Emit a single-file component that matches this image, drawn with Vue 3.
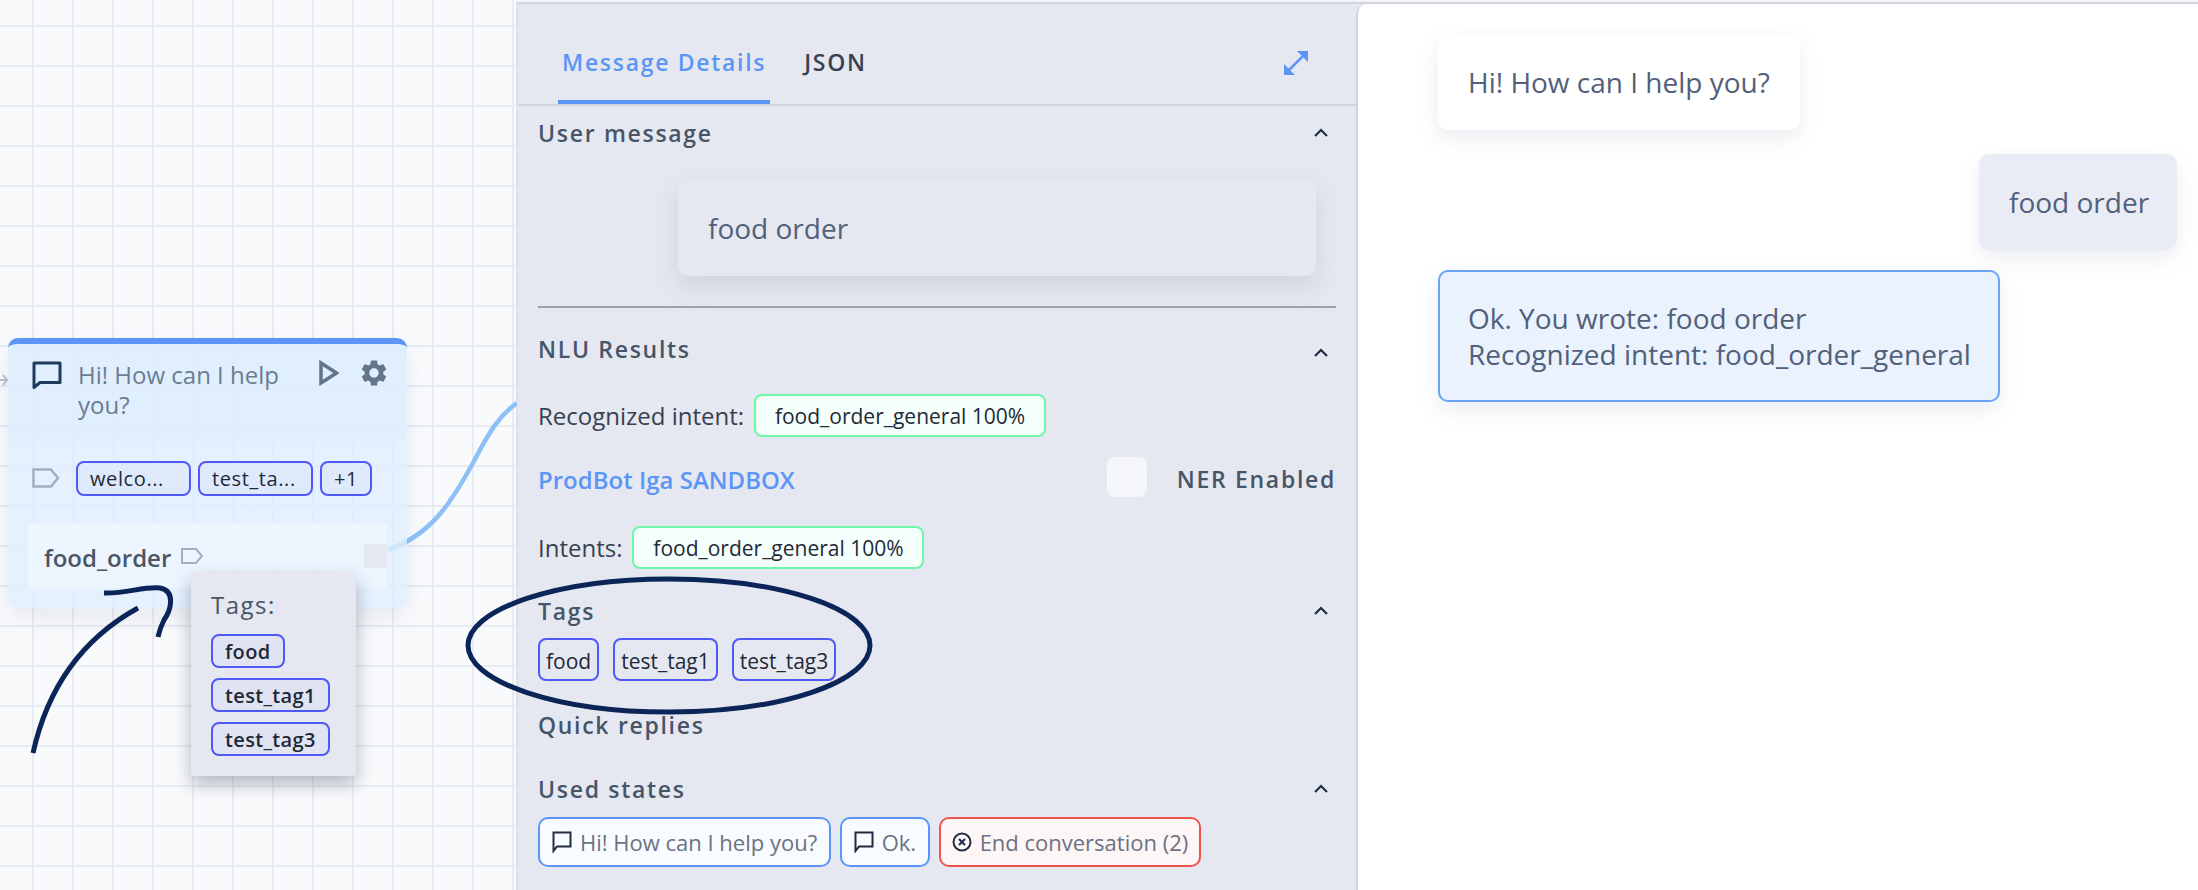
<script setup>
const nodeTags = ['welco...', 'test_ta...']
const popupTags = ['food', 'test_tag1', 'test_tag3']
const gear = 'M19.14 12.94c.04-.3.06-.61.06-.94 0-.32-.02-.64-.07-.94l2.03-1.58a.49.49 0 0 0 .12-.61l-1.92-3.32a.488.488 0 0 0-.59-.22l-2.39.96c-.5-.38-1.03-.7-1.62-.94l-.36-2.54a.484.484 0 0 0-.48-.41h-3.84c-.24 0-.43.17-.47.41l-.36 2.54c-.59.24-1.13.57-1.62.94l-2.39-.96c-.22-.08-.47 0-.59.22L2.74 8.87c-.12.21-.08.47.12.61l2.03 1.58c-.05.3-.09.63-.09.94s.02.64.07.94l-2.03 1.58a.49.49 0 0 0-.12.61l1.92 3.32c.12.22.37.29.59.22l2.39-.96c.5.38 1.03.7 1.62.94l.36 2.54c.05.24.24.41.48.41h3.84c.24 0 .44-.17.47-.41l.36-2.54c.59-.24 1.13-.56 1.62-.94l2.39.96c.22.08.47 0 .59-.22l1.92-3.32c.12-.22.07-.47-.12-.61l-2.01-1.58zM12 15.6c-1.98 0-3.6-1.62-3.6-3.6s1.62-3.6 3.6-3.6 3.6 1.62 3.6 3.6-1.62 3.6-3.6 3.6z'
</script>

<template>
  <div class="app">
    <section class="canvas">
      <svg class="edge" width="517" height="890" viewBox="0 0 517 890">
        <path d="M388 550 C430 535 450 505 473 463 C490 430 500 415 517 403" fill="none" stroke="#8cc0f7" stroke-width="4.5" />
        <path d="M0 380 H6 M3 375 L7 380 L3 385" fill="none" stroke="#b9bec7" stroke-width="2" />
      </svg>

      <div class="node">
        <div class="node-head">
          <svg class="ic-comment" viewBox="0 0 30 28"><path d="M2 2H28V21.5H8L2 26.5Z" fill="none" stroke="#1e3a5f" stroke-width="3" stroke-linejoin="round" /></svg>
          <p class="node-title">Hi! How can I help you?</p>
          <svg class="ic-play" viewBox="0 0 20 26"><path d="M2 3L17.5 13L2 23Z" fill="none" stroke="#64748b" stroke-width="3.5" /></svg>
          <svg class="ic-gear" viewBox="2 2 20 20"><path :d="gear" fill="#64748b" /></svg>
        </div>
        <div class="node-tags">
          <svg class="ic-tag" viewBox="0 0 28 20"><path d="M1.5 1.5H19L26 10L19 18.5H1.5Z" fill="none" stroke="#a3afbd" stroke-width="2.5" /></svg>
          <span v-for="t in nodeTags" :key="t" class="chip node-chip wide">{{ t }}</span>
          <span class="chip node-chip">+1</span>
        </div>
        <div class="node-row">
          <span class="row-name">food_order</span>
          <svg class="ic-tag-small" viewBox="0 0 22 16"><path d="M1 1H15L21 8L15 15H1Z" fill="none" stroke="#a3afbd" stroke-width="2" /></svg>
          <span class="handle"></span>
        </div>
      </div>

      <div class="popup">
        <div class="popup-title">Tags:</div>
        <div v-for="t in popupTags" :key="t"><span class="chip popup-chip">{{ t }}</span></div>
      </div>
    </section>

    <section class="panel">
      <header class="tabs">
        <span class="tab active">Message Details</span>
        <span class="tab">JSON</span>
        <svg class="ic-expand" viewBox="0 0 26 26"><path d="M2 24L24 2" stroke="#5b96f7" stroke-width="2.5" /><path d="M14 1H25V12Z M1 14V25H12Z" fill="#5b96f7" /></svg>
      </header>
      <div class="content">
        <div class="head first"><span>User message</span><svg class="chev" viewBox="0 0 16 10"><path d="M2 8L8 2L14 8" fill="none" stroke="#1f2d45" stroke-width="2.2" /></svg></div>
        <div class="bubble-wrap"><div class="bubble user-bubble">food order</div></div>
        <hr class="rule" />
        <div class="head nlu"><span>NLU Results</span><svg class="chev low" viewBox="0 0 16 10"><path d="M2 8L8 2L14 8" fill="none" stroke="#1f2d45" stroke-width="2.2" /></svg></div>
        <div class="line rec"><span>Recognized intent:</span><span class="chip green">food_order_general 100%</span></div>
        <div class="line bot">
          <span class="bot-name">ProdBot Iga SANDBOX</span>
          <span class="toggle"></span>
          <span class="ner">NER Enabled</span>
        </div>
        <div class="line intents"><span>Intents:</span><span class="chip green">food_order_general 100%</span></div>
        <div class="head tags-head"><span>Tags</span><svg class="chev" viewBox="0 0 16 10"><path d="M2 8L8 2L14 8" fill="none" stroke="#1f2d45" stroke-width="2.2" /></svg></div>
        <div class="tags-row">
          <span class="chip tag">food</span>
          <span class="chip tag">test_tag1</span>
          <span class="chip tag">test_tag3</span>
        </div>
        <div class="head quick"><span>Quick replies</span></div>
        <div class="head used"><span>Used states</span><svg class="chev" viewBox="0 0 16 10"><path d="M2 8L8 2L14 8" fill="none" stroke="#1f2d45" stroke-width="2.2" /></svg></div>
        <div class="states">
          <span class="state blue"><svg class="ic-state" viewBox="0 0 20 22"><path d="M1.5 1.5H18.5V15.5H5L1.5 20Z" fill="none" stroke="#1f2d45" stroke-width="2" /></svg>Hi! How can I help you?</span>
          <span class="state blue"><svg class="ic-state" viewBox="0 0 20 22"><path d="M1.5 1.5H18.5V15.5H5L1.5 20Z" fill="none" stroke="#1f2d45" stroke-width="2" /></svg>Ok.</span>
          <span class="state red"><svg class="ic-state" viewBox="0 0 20 22"><circle cx="10" cy="11" r="8.5" fill="none" stroke="#1f2d45" stroke-width="2" /><path d="M7 8L13 14M13 8L7 14" stroke="#1f2d45" stroke-width="2" /></svg>End conversation (2)</span>
        </div>
      </div>
    </section>

    <section class="chat">
      <div class="chat-inner">
        <div class="bubble msg bot-msg">Hi! How can I help you?</div>
        <div class="bubble msg me-msg">food order</div>
        <div class="bubble msg reply-msg">Ok. You wrote: food order<br />Recognized intent: food_order_general</div>
      </div>
    </section>

    <svg class="ink" width="2198" height="890" viewBox="0 0 2198 890">
      <path d="M33 753 C47 690 80 640 138 608" />
      <path d="M104 593 C125 594 145 586 160 588 C176 591 171 610 164 620 C161 626 159 632 158 637" />
      <ellipse cx="669" cy="645.5" rx="201" ry="66.5" />
    </svg>
  </div>
</template>

<style>
html, body { margin: 0; background: #fff; }
</style>

<style scoped>
.app {
  position: relative;
  display: flex;
  width: 2198px;
  height: 890px;
  overflow: hidden;
  background: #f3f4f8;
  font-family: "Open Sans", "Noto Sans", sans-serif;
  color: #475569;
}
p { margin: 0; }

.canvas {
  position: relative;
  flex: 0 0 516px;
  background-color: #f9fafc;
  background-image:
    linear-gradient(to right, #e8ebf2 2px, transparent 2px),
    linear-gradient(to bottom, #e8ebf2 2px, transparent 2px);
  background-size: 40px 40px;
  background-position: 32px 25px;
}
.edge { position: absolute; left: 0; top: 0; }

.node {
  position: absolute;
  left: 8px;
  top: 338px;
  width: 399px;
  height: 270px;
  box-sizing: border-box;
  border-top: 6px solid #5b96f7;
  border-radius: 10px;
  background: linear-gradient(to bottom, rgba(223, 238, 254, 0.96) 0, rgba(223, 238, 254, 0.96) 96px, rgba(223, 238, 254, 0.78) 100px);
  box-shadow: 0 10px 24px rgba(100, 116, 139, 0.12);
}
.node-head {
  display: flex;
  align-items: flex-start;
  height: 96px;
  box-sizing: border-box;
  padding: 16px 20px 0 24px;
}
.ic-comment { width: 30px; height: 28px; margin-top: 1px; flex: none; }
.node-title {
  width: 226px;
  margin-left: 16px;
  font-size: 24px;
  line-height: 30px;
  color: #6b7c93;
}
.ic-play { width: 20px; height: 26px; margin-left: 17px; flex: none; }
.ic-gear { width: 26px; height: 26px; margin-left: 22px; flex: none; }

.node-tags {
  display: flex;
  align-items: center;
  gap: 7px;
  height: 76px;
  padding: 0 0 0 24px;
}
.ic-tag { width: 28px; height: 20px; margin-right: 9px; flex: none; }
.chip {
  display: inline-flex;
  align-items: center;
  box-sizing: border-box;
  border-radius: 8px;
  border: 2px solid #5058f8;
}
.node-chip {
  height: 35px;
  padding: 0 12px;
  background: #dee9fc;
  color: #1f2937;
  font-size: 20px;
  letter-spacing: 0.6px;
}
.node-chip.wide { width: 115px; }

.node-row {
  display: flex;
  align-items: center;
  height: 64px;
  margin: 8px 20px 0;
  padding: 0 0 0 16px;
  background: rgba(240, 247, 255, 0.72);
}
.row-name { font-size: 24px; font-weight: 600; color: #4b5563; position: relative; top: 1px; }
.ic-tag-small { width: 22px; height: 16px; margin: 0 0 0 10px; }
.handle {
  width: 23px;
  height: 24px;
  margin-left: auto;
  border-radius: 3px;
  background: #e5e8f0;
}

.popup {
  position: absolute;
  left: 191px;
  top: 572px;
  width: 165px;
  height: 204px;
  box-sizing: border-box;
  padding: 16px 20px;
  border-radius: 4px;
  background: #e5e8f0;
  box-shadow: 0 8px 18px rgba(71, 85, 105, 0.4);
}
.popup-title {
  height: 46px;
  line-height: 34px;
  font-size: 24px;
  font-weight: 500;
  letter-spacing: 1.5px;
  color: #475569;
}
.popup-chip {
  height: 34px;
  padding: 0 12px;
  margin-bottom: 10px;
  background: #dfe3f2;
  color: #1f2937;
  font-size: 20px;
  font-weight: 600;
  letter-spacing: 0.35px;
  vertical-align: top;
}

.panel {
  flex: 0 0 840px;
  box-sizing: border-box;
  margin-top: 2px;
  border-top: 2px solid #d2d5de;
  border-left: 2px solid #dfe2ea;
  background: #e5e8f0;
}
.tabs {
  display: flex;
  align-items: flex-start;
  height: 100px;
  padding: 0 47px 0 40px;
  border-bottom: 2px solid #cfd3dc;
  box-sizing: content-box;
}
.tab {
  height: 96px;
  line-height: 116px;
  padding: 0 4px;
  font-size: 23px;
  font-weight: 600;
  letter-spacing: 1.7px;
  color: #374151;
  margin-right: 30px;
  box-sizing: content-box;
}
.tab.active { color: #5b96f7; border-bottom: 4px solid #5b96f7; }
.ic-expand { width: 26px; height: 26px; margin: 46px 0 0 auto; }

.content { padding: 0 20px; }
.head {
  display: flex;
  align-items: center;
  justify-content: space-between;
  height: 34px;
  font-size: 23px;
  font-weight: 600;
  letter-spacing: 1.7px;
  color: #475569;
}
.chev { width: 16px; height: 10px; margin-right: 7px; }
.chev.low { margin-top: 8px; }
.head.first { margin-top: 10px; }
.bubble-wrap { display: flex; justify-content: flex-end; margin-top: 30px; padding-right: 20px; }
.bubble {
  box-sizing: border-box;
  border-radius: 10px;
  font-size: 28px;
  line-height: 36px;
  color: #52607a;
}
.user-bubble {
  width: 638px;
  height: 96px;
  padding: 30px;
  background: #e5e8f0;
  box-shadow: 0 10px 24px rgba(148, 163, 184, 0.3);
}
.rule { height: 2px; margin: 30px 0 0; border: 0; background: #9ca3af; }
.head.nlu { margin-top: 24px; }
.line { display: flex; align-items: center; font-size: 24px; color: #374151; }
.line.rec { margin-top: 28px; gap: 10px; }
.green {
  height: 43px;
  width: 292px;
  justify-content: center;
  border-color: #6ef7a8;
  background: #f5fffb;
  color: #1f2937;
  font-size: 21px;
}
.line.bot { height: 40px; margin-top: 20px; }
.bot-name { margin-top: 4px; font-size: 24px; font-weight: 600; color: #5b96f7; }
.toggle { width: 40px; height: 40px; margin-left: auto; border-radius: 8px; background: #f5f6fa; }
.ner { margin: 4px 0 0 30px; font-size: 23px; font-weight: 600; letter-spacing: 1.7px; color: #475569; }
.line.intents { margin-top: 29px; gap: 10px; }
.head.tags-head { margin-top: 25px; }
.tags-row { display: flex; gap: 14px; margin-top: 10px; }
.tag {
  height: 43px;
  padding: 2px 6px 0;
  color: #1f2937;
  font-size: 21px;
}
.head.quick { margin-top: 27px; }
.head.used { margin-top: 30px; }
.states { display: flex; gap: 8.5px; margin-top: 11px; }
.state {
  display: inline-flex;
  align-items: center;
  gap: 8px;
  height: 50px;
  box-sizing: border-box;
  padding: 0 12px;
  border-radius: 10px;
  font-size: 22px;
  color: #6b7280;
}
.state.blue { border: 2px solid #5b96f7; background: #f8fbff; }
.state.red { border: 2px solid #ef5350; background: #fdf6f6; padding: 0 11px; }
.ic-state { width: 20px; height: 22px; flex: none; }

.chat {
  flex: 1;
  display: flex;
  box-sizing: border-box;
  margin-top: 2px;
  border-top: 2px solid #d2d5de;
  background: #e5e8f0;
}
.chat-inner {
  flex: 1;
  display: flex;
  flex-direction: column;
  align-items: flex-start;
  box-sizing: border-box;
  padding: 30px 21px 0 80px;
  border-left: 2px solid #cfd3dc;
  border-top-left-radius: 10px;
  background: #fff;
}
.msg { padding: 30px; white-space: nowrap; }
.bot-msg { width: 362px; height: 96px; background: #fff; box-shadow: 0 8px 20px rgba(148, 163, 184, 0.2); }
.me-msg {
  align-self: flex-end;
  width: 198px;
  height: 96px;
  margin-top: 24px;
  background: #e9ecf4;
  box-shadow: 0 8px 20px rgba(148, 163, 184, 0.2);
}
.reply-msg {
  width: 562px;
  height: 132px;
  margin-top: 20px;
  border: 2px solid #6aa3f5;
  background: #e9f2fd;
  padding: 28px;
  box-shadow: 0 8px 20px rgba(148, 163, 184, 0.2);
}
.ink { position: absolute; left: 0; top: 0; pointer-events: none; }
.ink path, .ink ellipse { fill: none; stroke: #0b2559; stroke-width: 5; }
</style>
